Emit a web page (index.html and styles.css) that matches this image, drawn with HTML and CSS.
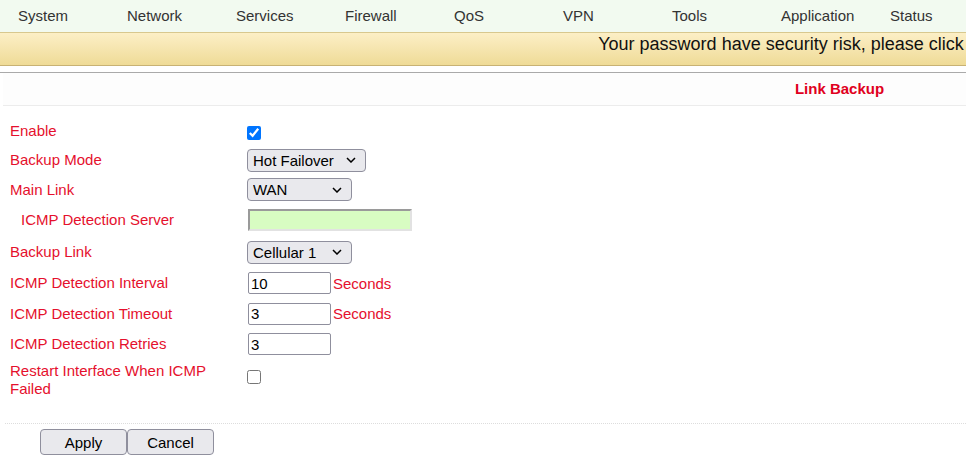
FILE: index.html
```html
<!DOCTYPE html>
<html>
  <head>
    <title>Link Backup</title>
    <link rel="stylesheet" href="styles.css">
  </head>
  <body>
    <div class="page">
      <div class="nav">
        <a href="#">System</a>
        <a href="#">Network</a>
        <a href="#">Services</a>
        <a href="#">Firewall</a>
        <a href="#">QoS</a>
        <a href="#">VPN</a>
        <a href="#">Tools</a>
        <a href="#">Application</a>
        <a href="#">Status</a>
      </div>
      <div class="banner">Your password have security risk, please click here to modify!</div>

      <div class="content">
        <div class="title">Link Backup</div>

        <form id="linkBackupForm">
          <table class="form-table">
            <colgroup>
              <col class="col-label" />
              <col />
            </colgroup>
            <tr class="r1">
              <td class="label">Enable</td>
              <td><input type="checkbox" class="check" checked /></td>
            </tr>
            <tr class="r2">
              <td class="label">Backup Mode</td>
              <td>
                <select class="sel sel-wide">
                  <option>Hot Failover</option>
                  <option>Cold Failover</option>
                  <option>Load Balance</option>
                </select>
              </td>
            </tr>
            <tr class="r3">
              <td class="label">Main Link</td>
              <td>
                <select class="sel">
                  <option>WAN</option>
                  <option>Cellular 1</option>
                </select>
              </td>
            </tr>
            <tr class="r4">
              <td class="label sub">ICMP Detection Server</td>
              <td><input type="text" class="server" /></td>
            </tr>
            <tr class="r5">
              <td class="label">Backup Link</td>
              <td>
                <select class="sel">
                  <option>Cellular 1</option>
                  <option>WAN</option>
                </select>
              </td>
            </tr>
            <tr class="r6">
              <td class="label">ICMP Detection Interval</td>
              <td><input type="text" class="num" value="10" /><span class="unit">Seconds</span></td>
            </tr>
            <tr class="r7">
              <td class="label">ICMP Detection Timeout</td>
              <td><input type="text" class="num" value="3" /><span class="unit">Seconds</span></td>
            </tr>
            <tr class="r8">
              <td class="label">ICMP Detection Retries</td>
              <td><input type="text" class="num" value="3" /></td>
            </tr>
            <tr class="r9">
              <td class="label">Restart Interface When ICMP Failed</td>
              <td><input type="checkbox" class="check check-top" /></td>
            </tr>
          </table>

          <div class="actions">
            <input type="submit" class="btn" value="Apply" /><input type="button" class="btn" value="Cancel" />
          </div>
        </form>
      </div>
    </div>
  </body>
</html>
```

FILE: styles.css
```css
body {
  margin: 0;
  font-family: "Liberation Sans", Arial, sans-serif;
  font-size: 15px;
  overflow: hidden;
  background: #fff;
}

.page {
  width: 1676px;
}

.nav {
  display: flex;
  height: 32px;
  background-color: #f2faf0;
  border-bottom: 1px solid #d8c88e;
}

.nav a {
  width: 109px;
  padding-left: 18px;
  box-sizing: border-box;
  line-height: 32px;
  color: #333;
  text-decoration: none;
}

.banner {
  height: 32px;
  line-height: 22px;
  font-size: 18px;
  color: #111;
  text-align: center;
  padding-left: 10px;
  background: linear-gradient(#fcefc6, #efdb97);
  border-bottom: 1px solid #c8b274;
}

.content {
  margin-top: 6px;
  border-top: 1px solid #aaa;
}

.title {
  height: 32px;
  line-height: 32px;
  margin-left: 3px;
  background-color: #fdfdfd;
  border-bottom: 1px solid #ececec;
  text-align: center;
  font-weight: bold;
  color: #e00020;
}

.form-table {
  margin: 11px 0 0 10px;
  width: 600px;
  table-layout: fixed;
  border-collapse: collapse;
}

.col-label {
  width: 237px;
}

.form-table td {
  padding: 0;
  vertical-align: middle;
}

.label {
  color: #e5102d;
  line-height: 18px;
}

.label.sub {
  padding-left: 11px !important;
}

.r1 { height: 28px; }
.r2 { height: 30px; }
.r3 { height: 29px; }
.r4 { height: 32px; }
.r5 { height: 32px; }
.r6 { height: 30px; }
.r7 { height: 31px; }
.r8 { height: 30px; }
.r9 { height: 42px; }

.check {
  margin: 0;
  width: 14px;
  height: 14px;
  vertical-align: middle;
}

.check-top {
  margin-bottom: 6px;
}

.sel {
  appearance: none;
  width: 105px;
  height: 23px;
  padding: 0 0 0 5px;
  font-family: "Liberation Sans", Arial, sans-serif;
  font-size: 15px;
  color: #000;
  background-color: #e9e9ed;
  background-image: url("data:image/svg+xml,%3Csvg xmlns='http://www.w3.org/2000/svg' width='10' height='6' viewBox='0 0 10 6'%3E%3Cpath d='M1 1l4 4 4-4' fill='none' stroke='%23000' stroke-width='1.5'/%3E%3C/svg%3E");
  background-repeat: no-repeat;
  background-position: right 9px center;
  border: 1px solid #8f8f9d;
  border-radius: 4px;
  vertical-align: middle;
}

.sel-wide {
  width: 119px;
}

.server {
  width: 164px;
  height: 22px;
  margin: 0 0 0 1px;
  box-sizing: border-box;
  background-color: #d8fcc2;
  border: 2px solid;
  border-color: #9a9a9a #e2e2e2 #e2e2e2 #9a9a9a;
  vertical-align: middle;
}

.num {
  width: 83px;
  height: 22px;
  margin: 0 0 0 1px;
  padding: 0 2px;
  box-sizing: border-box;
  border: 1px solid #8f8f9d;
  border-radius: 2px;
  font-family: "Liberation Sans", Arial, sans-serif;
  font-size: 15px;
  color: #000;
  vertical-align: middle;
}

.unit {
  margin-left: 2px;
  color: #e5102d;
  vertical-align: middle;
}

.actions {
  margin: 22px 0 0 5px;
  padding: 5px 0 0 35px;
  border-top: 1px dotted #ddd;
}

.btn {
  width: 87px;
  height: 26px;
  margin: 0;
  font-family: "Liberation Sans", Arial, sans-serif;
  font-size: 15px;
  color: #000;
  background-color: #e9e9ed;
  border: 1px solid #8f8f9d;
  border-radius: 4px;
}
```
